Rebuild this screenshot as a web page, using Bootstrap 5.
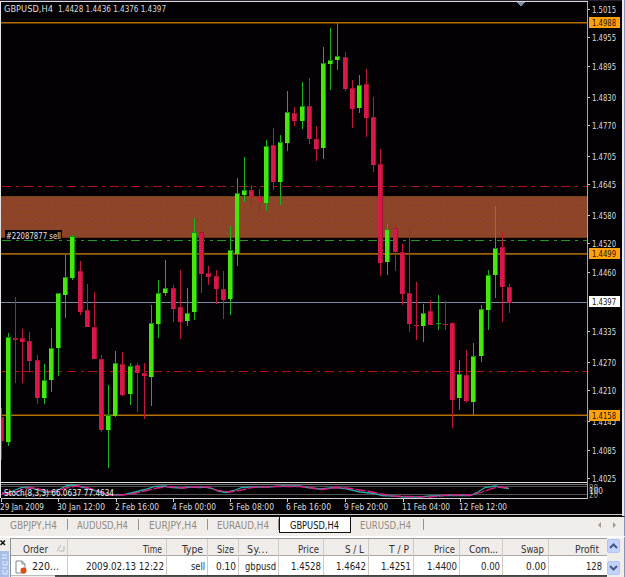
<!DOCTYPE html>
<html lang="en">
<head>
<meta charset="utf-8">
<meta name="viewport" content="width=device-width, initial-scale=1">
<title>GBPUSD,H4</title>
<link href="https://cdn.jsdelivr.net/npm/bootstrap@5.3.0/dist/css/bootstrap.min.css" rel="stylesheet">
<style>
body{font-family:"DejaVu Sans","Liberation Sans",sans-serif;font-stretch:condensed;font-size:11px;line-height:1;color:#222;background:#ece8e4;width:625px;height:577px}
.chart-pane{height:516px;background:#030104}
.chart-pane svg{display:block}
.chart-pane text{font-family:"DejaVu Sans","Liberation Sans",sans-serif;font-stretch:condensed;font-size:10px}
.dither{background-color:#ece8e5;background-image:conic-gradient(#f6f4f0 25%,transparent 0 50%,#f2efec 0 75%,transparent 0);background-size:2px 2px;border-right:1px solid #8793b5}
.tabs-strip{height:20px;border-top:1px solid #111}
.chart-tab{color:#8e897f;height:16px;padding-top:2px}
.chart-tab.current{background:#fff;color:#111;border:1px solid #111;border-top:0}
.terminal{height:41px;border-top:2px solid #fff}
.dock{width:10px}
.dock-x{height:14px}
.dock-title{background:#a9bfe8;height:27px}
.grid-area{width:597px;border-left:1px solid #8f8f8f;border-top:1px solid #9b9b9b}
.trade-row{display:grid;grid-template-columns:57px 99px 41px 31px 40px 45px 45px 45px 46px 43px 46px 58px}
.trade-row.head{height:17px;border-bottom:1px solid #a9a6a0}
.trade-row.item{height:19px;background:#fff}
.cell{border-right:1px solid #cfccc5}
.cell:last-child{border-right:0}
.scroller{width:17px;gap:8px;padding-top:1px}
.scroll-btn{width:13px;height:14px;background:#c3d3fb;border:1px solid #b2c5f4;border-radius:2px}
</style>
</head>
<body class="overflow-hidden d-flex flex-column">
<main class="chart-pane flex-shrink-0">
<svg id="chart" width="625" height="516" viewBox="0 0 625 516" shape-rendering="crispEdges"></svg>
</main>

<nav class="tabs-strip dither d-flex justify-content-between flex-shrink-0" id="tabs"></nav>

<section class="terminal dither d-flex flex-shrink-0">
  <div class="dock d-flex flex-column flex-shrink-0">
    <svg class="dock-x" width="10" height="14"><path d="M0.5 2.5l4.5 4.5M5 2.5l-4.5 4.5" stroke="#111" stroke-width="1.5"/></svg>
    <svg class="dock-title" width="9" height="27"><path d="M2 4h5M2 7h5M3 10v4h4v-4M2 17h5M3 19v4h4v-4" stroke="#e7effc" fill="none"/></svg>
  </div>
  <div class="grid-area flex-shrink-0">
    <div class="trade-row head" id="head"></div>
    <div class="trade-row item" id="item"></div>
    <svg class="d-block" width="596" height="3"><path d="M0 .5H596" stroke="#bbb"/><path d="M44 1H596" stroke="#1b1b1b" stroke-width="1.4"/></svg>
  </div>
  <div class="scroller d-flex flex-column">
    <div class="scroll-btn d-flex"><svg width="11" height="12"><path d="M2 8l3.5-3.5L9 8" fill="none" stroke="#435a86" stroke-width="2"/></svg></div>
    <div class="scroll-btn d-flex"><svg width="11" height="12"><path d="M2 4l3.5 3.5L9 4" fill="none" stroke="#435a86" stroke-width="2"/></svg></div>
  </div>
</section>

<script src="https://cdn.jsdelivr.net/npm/bootstrap@5.3.0/dist/js/bootstrap.bundle.min.js"></script>
<script>
// Text drawn at a given width, so that labels keep their column
const label = (t, x, y, w, fill, size) =>
  `<text x="${x}" y="${y}" textLength="${w}" lengthAdjust="${t.endsWith('...') ? 'spacing' : 'spacingAndGlyphs'}" fill="${fill}" style="font-size:${size || 9.5}px" xml:space="preserve">${t}</text>`;
const line = (x1, y1, x2, y2, c, w, d) =>
  `<path d="M${x1} ${y1}L${x2} ${y2}" stroke="${c}" stroke-width="${w || 1}" fill="none"${d ? ` stroke-dasharray="${d}"` : ''}/>`;
const box = (x, y, w, h, c) => `<rect x="${x}" y="${y}" width="${w}" height="${h}" fill="${c}"/>`;

// Candles: direction, body top, body bottom, high, low
const candles = `r417 441 408 460,g337 442 333 446,r338 340 297 383,r338 342 329 383,r341 361 332 371,r360 398 355 404,g380 398 364 404,g348 380 328 392,g293 348 293 376,g277 295 255 318,g236 278 235 280,r271 312 261 315,r310 327 284 327,r327 359 292 359,r359 430 355 432,g415 430 385 468,g363 416 351 417,r364 395 352 396,g366 394 363 405,r365 373 363 412,r373 376 363 419,g323 377 305 406,g293 324 280 338,g288 293 260 296,r288 309 285 322,r307 322 270 339,g313 321 288 326,g232 312 218 320,r232 274 230 293,r273 277 266 285,r276 289 270 304,r289 300 271 319,g250 299 226 315,g193 254 178 266,g190 195 157 202,r190 197 185 205,r196 202 189 213,g146 203 140 211,r145 182 128 190,g142 182 135 205,g112 143 91 151,r113 121 107 126,g106 121 82 129,r106 139 78 144,r139 149 126 161,g63 148 47 159,g60 64 28 90,g56 60 23 70,r57 89 52 91,r88 109 80 128,g85 108 75 113,r84 118 69 137,r117 165 97 172,r164 263 149 276,g229 262 224 275,r228 252 225 271,r252 294 244 305,r293 324 228 332,r325 326 282 340,g313 326 304 342,r311 325 300 325,g323 324 295 330,r324 325 301 330,r323 400 322 428,g374 398 360 410,r375 401 350 403,g356 402 343 416,g309 356 305 362,g275 310 270 330,g248 275 206 298,r247 287 232 322,r287 303 284 313`.split(',');

let s = '<defs><pattern id="bear" width="2" height="2" patternUnits="userSpaceOnUse"><rect width="2" height="2" fill="#d81638"/><rect width="1" height="1" fill="#e01c60"/></pattern>' +
  '<pattern id="zone" width="7" height="5" patternUnits="userSpaceOnUse"><rect width="7" height="5" fill="#8d422b"/><path d="M0 3h2v-1h2v-1h1" fill="none" stroke="#8e5010" stroke-width=".7"/></pattern></defs>';
s += box(0, 0, 625, 516, '#030104');
s += box(1, 196, 586, 42, 'url(#zone)') + line(1, 196.5, 587, 196.5, '#774316') + line(1, 237.5, 587, 237.5, '#6b3910');
const dashes = '9 5 3 4.5';
s += line(2, 186.5, 587, 186.5, '#ad1023', 1, dashes);
s += line(2, 240.5, 587, 240.5, '#229625', 1, dashes);
s += line(2, 371.5, 587, 371.5, '#b80c12', 1, dashes);
for (const y of [22, 253, 415]) s += box(1, y, 586, 1, y == 253 ? '#9b6307' : '#b56f00') + box(1, y + (y == 415 ? -1 : 1), 586, 1, y == 253 ? '#774900' : '#593600');
s += line(1, 302.5, 587, 302.5, '#7889a5');
candles.forEach((c, i) => {
  const g = c[0] == 'g', [t, b, h, l] = c.slice(1).split(' ').map(Number);
  const x = Math.floor(8.4 + 7.162 * (i - 1));
  s += box(x, h, 1, l - h, g ? '#18b41e' : '#bd1838');
  if (b - t < 2) s += box(x - 2, t, 5, 1, g ? '#159b1b' : '#b51636');
  else s += box(x - 2, t, 5, b - t, g ? '#168f16' : '#a31535') + box(x - 2, t + .5, 4, b - t - 1, g ? '#46e80b' : 'url(#bear)');
});
// Order caption and heading
s += box(5, 230, 57, 10, '#050305') + label('#22087877 sell', 6, 238.5, 55, '#e4e4e4', 9);
s += label('GBPUSD,H4', 4, 12, 49, '#dcdcdc') + label('1.4428 1.4436 1.4376 1.4397', 58, 12, 108, '#dcdcdc');
s += `<path d="M516 2h9l-4.5 4.5z" fill="#7890a7"/>`;

// Stochastic strip
s += line(0, 482.5, 587, 482.5, '#e4e4e4') + line(0, 484.5, 587, 484.5, '#777') + line(1, 486.5, 587, 486.5, '#505054') + line(1, 494.5, 587, 494.5, '#505054') + line(1, 498.5, 587, 498.5, '#d2d2d2');
const k = '2,493 8,493 15,490 22,487.5 28,487 35,489 45,492 52,492 60,489 66,486 73,485 80,486.5 90,489 97,491 105,494 118,495 125,494.5 135,492 145,489.5 155,486.5 165,486 172,487.5 182,488 190,487 200,487.5 205,487 212,488.5 218,491 226,492.5 234,490.5 242,487.5 252,487 268,487 282,485.8 300,486 308,487.5 320,489 335,487.5 345,488.5 360,492 375,493.5 382,495.5 392,496 405,497 420,497 430,496 445,495.5 470,495.5 478,492 485,487.5 495,486 502,487.5 509,488.5';
const d = '2,493 10,494 18,491 26,488 35,488 46,491 56,491.5 66,488 77,486 88,488 98,491 108,495 120,495 132,494 145,491 157,488 170,486.5 182,488 195,487 208,487 218,490.5 230,492 242,490 252,487.5 265,487 276,486.5 300,486.5 312,488 322,489.5 335,487.5 347,488 360,490 372,492 384,494.5 392,496 410,496.5 430,497 448,495 472,495 482,492 492,488.5 499,487 509,488';
s += `<g shape-rendering="auto" fill="none" stroke-width="1.3"><polyline points="${k}" stroke="#27aaa0"/><polyline points="${d}" stroke="#e01b86" stroke-dasharray="10 2"/></g>`;
s += label('Stoch(8,3,3) 66.0637 77.4634', 4, 496, 110, '#f0f0f0', 9);
[['29 Jan 2009', 0, 44], ['30 Jan 12:00', 57, 48], ['2 Feb 16:00', 115, 44], ['4 Feb 00:00', 172, 44], ['5 Feb 08:00', 229, 45], ['6 Feb 16:00', 286, 45], ['9 Feb 20:00', 344, 44], ['11 Feb 04:00', 402, 48], ['12 Feb 12:00', 459, 48]]
  .forEach(([t, x, w]) => s += label(t, x, 510, w, '#dcdcdc') + line(x + 1.5, 498, x + 1.5, 502, '#ccc'));

// Price scale
s += line(587.5, 1, 587.5, 499, '#aaa6a2');
[['5015', 9], ['4955', 37.5], ['4895', 66], ['4830', 97], ['4770', 125.5], ['4705', 156], ['4645', 184.5], ['4580', 215], ['4520', 243.5], ['4460', 272.5], ['4335', 331.5], ['4270', 362], ['4210', 390.5], ['4145', 421.5], ['4085', 450], ['4025', 478]]
  .forEach(([t, y]) => s += label('1.' + t, 592, y + 3.5, 24, '#dcdcdc', 9) + box(588, Math.floor(y), 2, 1, '#ccc'));
[['4988', 17, '#ffa20c'], ['4499', 248, '#ffa20c'], ['4397', 296, '#fff'], ['4158', 410, '#ffa20c']]
  .forEach(([t, y, c]) => s += box(589, y, 31, 11, c) + label('1.' + t, 592, y + 9, 24, '#1a1206', 9));
s += label('80', 589, 491, 9, '#999', 8) + label('20', 589, 498, 9, '#999', 8) + label('100', 589, 494, 14, '#ddd', 9);

// Window frame
s += box(0, 0, 625, 1, '#282230') + box(0, 1, 588, 1, '#ddd9e0') + box(0, 1, 1, 497, '#e4e4e4');
s += box(622, 0, 2, 516, '#eeeae8') + box(624, 0, 1, 516, '#8793b5') + box(0, 514, 622, 1, '#c9c5c1');
document.getElementById('chart').innerHTML = s;

// Text fitted to a width inside an HTML cell
const fit = (t, w, c) => `<svg class="d-block flex-shrink-0 overflow-visible" width="${w}" height="13">${label(t, 0, 10, w, c, 10.5)}</svg>`;

// Chart tabs: caption, text width, left padding, right padding
document.getElementById('tabs').innerHTML = '<div class="d-flex">' +
  [['GBPJPY,H4', 47, 10, 11], ['AUDUSD,H4', 51, 9, 11], ['EURJPY,H4', 48, 10, 11], ['EURAUD,H4', 52, 9, 10], ['GBPUSD,H4', 49, 10, 11], ['EURUSD,H4', 51, 9, 13]]
    .map(([t, w, l, r], i) => `<div class="chart-tab d-flex${i == 4 ? ' current' : ''}" style="padding-left:${l}px">${fit(t, w, i == 4 ? '#111' : '#918c82')}<svg width="${r}" height="12"><path d="M${r - .5} 0V11" stroke="${i == 4 ? 'none' : '#99948b'}"/></svg></div>`).join('') +
  '</div><svg width="26" height="16"><path d="M3 5v6l-3-3zM15 5v6l3-3z" fill="#a09b94"/></svg>';

// Trade table: header text, width, row text, width
const cols = [['Order', 25, '220...', 27], ['Time', 19, '2009.02.13 12:22', 78], ['Type', 21, 'sell', 14], ['Size', 17, '0.10', 20], ['Sy...', 21, 'gbpusd', 31], ['Price', 21, '1.4528', 30], ['S / L', 19, '1.4642', 30], ['T / P', 20, '1.4251', 30], ['Price', 21, '1.4400', 30], ['Com...', 29, '0.00', 19], ['Swap', 23, '0.00', 20], ['Profit', 24, '128', 16]];
const sheet = '<svg class="ms-1" width="13" height="15"><path d="M1 1h6l3 3v9H1z" fill="#fff" stroke="#83868f"/><path d="M7 1v3h3" fill="none" stroke="#83868f"/><circle cx="8.5" cy="10.5" r="3" fill="#e34a13"/></svg>';
document.getElementById('head').innerHTML = cols.map(([t, w], i) =>
  `<div class="cell d-flex pt-1 ${i == 0 ? 'ps-2 ms-1' : i == 4 ? 'ps-2' : 'justify-content-end'} ${i == 11 ? 'pe-2' : 'pe-1'}">${fit(t, w, '#333')}${i == 0 ? '<svg class="ms-2 flex-shrink-0" width="9" height="11"><path d="M1 8l4-6M8 3v5H3" fill="none" stroke="#bcb8af"/></svg>' : ''}</div>`).join('');
document.getElementById('item').innerHTML = cols.map(([t0, w0, t, w], i) =>
  `<div class="cell d-flex pt-1 ${i ? 'justify-content-end' : ''}" style="padding-right:${i == 0 ? 0 : i == 11 ? 5 : 2}px">${i == 0 ? sheet + '<i class="ps-1"></i>' : ''}${fit(t, w, '#222')}</div>`).join('');
</script>
</body>
</html>
